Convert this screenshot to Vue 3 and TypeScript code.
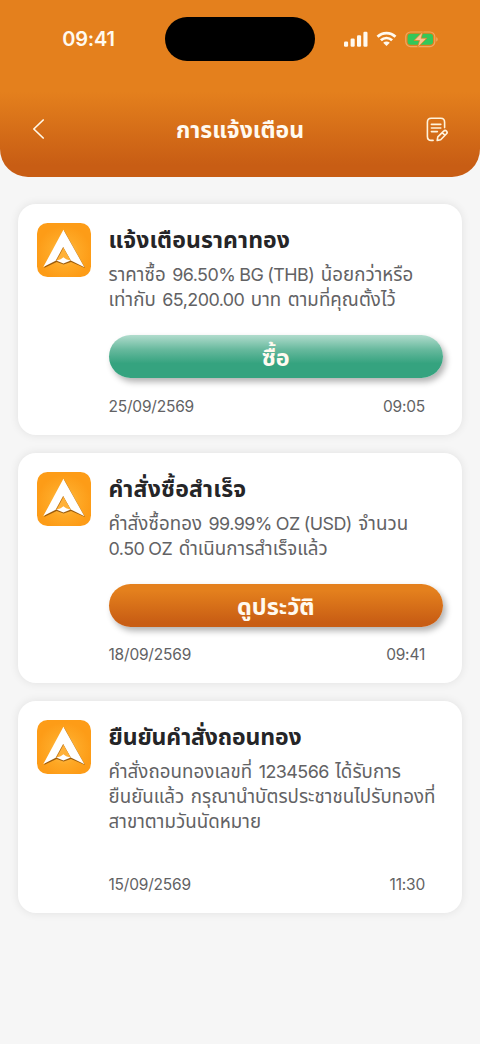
<script setup lang="ts">
interface Notice {
  id: string
  title: string
  lines: string[]
  action?: { label: string; tone: 'buy' | 'history' }
  date: string
  time: string
}

const notices: Notice[] = [
  {
    id: 'price',
    title: 'แจ้งเตือนราคาทอง',
    lines: ['ราคาซื้อ 96.50% BG (THB) น้อยกว่าหรือ', 'เท่ากับ 65,200.00 บาท ตามที่คุณตั้งไว้'],
    action: { label: 'ซื้อ', tone: 'buy' },
    date: '25/09/2569',
    time: '09:05',
  },
  {
    id: 'order',
    title: 'คำสั่งซื้อสำเร็จ',
    lines: ['คำสั่งซื้อทอง 99.99% OZ (USD) จำนวน', '0.50 OZ ดำเนินการสำเร็จแล้ว'],
    action: { label: 'ดูประวัติ', tone: 'history' },
    date: '18/09/2569',
    time: '09:41',
  },
  {
    id: 'withdraw',
    title: 'ยืนยันคำสั่งถอนทอง',
    lines: ['คำสั่งถอนทองเลขที่ 1234566 ได้รับการ', 'ยืนยันแล้ว กรุณานำบัตรประชาชนไปรับทองที่', 'สาขาตามวันนัดหมาย'],
    date: '15/09/2569',
    time: '11:30',
  },
]

// Latin runs are set slightly tighter and smaller than the Thai text around them.
const runs = (line: string) =>
  line
    .split(/([0-9A-Z(][0-9A-Z.,%() ]*[0-9A-Z%)])/)
    .filter(Boolean)
    .map((text) => ({ text, latin: /^[0-9A-Z(]/.test(text) }))
</script>

<template>
  <div class="screen">
    <header class="top">
      <div class="status">
        <span class="clock">09:41</span>
        <span class="island"></span>
        <span class="indicators">
          <svg width="25" height="17" viewBox="0 0 25 17" fill="#fffaf0">
            <rect x="0" y="10.5" width="4.1" height="5.3" rx="1.2" />
            <rect x="6.6" y="7.5" width="4.1" height="8.3" rx="1.2" />
            <rect x="13" y="4.3" width="4.1" height="11.5" rx="1.2" />
            <rect x="19.4" y=".8" width="4.1" height="15" rx="1.2" />
          </svg>
          <svg class="wifi" width="21" height="16" viewBox="0 0 21 16">
            <g fill="none" stroke="#fffaf0" stroke-width="2.7">
              <path d="M1.5 5.8C6.6.8 14.4.8 19.5 5.8" />
              <path d="M4.9 9.3c3.2-3.1 8-3.1 11.2 0" />
            </g>
            <path d="M7.2 11.7c1.9-1.7 4.7-1.7 6.6 0l-3.3 3.3z" fill="#fffaf0" />
          </svg>
          <svg class="battery" width="34" height="17" viewBox="0 0 34 17">
            <rect x=".8" y="1" width="29" height="14.6" rx="4.8" fill="none" stroke="#f0a860" stroke-width="1.2" />
            <rect x="2.6" y="2.8" width="25.4" height="11" rx="3.2" fill="#34c759" />
            <path d="M31.2 6.2c2 .7 2 3.6 0 4.3z" fill="#f0a860" />
            <path d="M18 .4 9 9.5h5.5L12.5 16.4 21.8 7.2h-5.6z" fill="#f9c490" stroke="#e4801d" stroke-width=".7" />
          </svg>
        </span>
      </div>
      <nav class="bar">
        <svg class="back" width="14" height="22" viewBox="0 0 14 22" fill="none" stroke="#fff8e8" stroke-width="1.7" stroke-linecap="round" stroke-linejoin="round">
          <path d="M11.2 2 1.8 11l9.4 9" />
        </svg>
        <h1>การแจ้งเตือน</h1>
        <svg width="24" height="26" viewBox="0 0 24 26" fill="none" stroke="#fff3dc" stroke-width="1.6" stroke-linecap="round" stroke-linejoin="round">
          <path d="M18.6 10.6V5.2c0-2.6-1.2-3.9-3.8-3.9H5.2c-2.6 0-3.8 1.3-3.8 3.9v14.3c0 2.6 1.2 3.9 3.8 3.9h1.9" />
          <path d="M5.4 7.4h9.4M5.4 11h9.4M5.4 14.6h6" />
          <path d="m11.8 19.8 5.9-5.7a1.8 1.8 0 0 1 2.8 2.7l-5.8 5.9-3.5.8zM16.2 15.6l2.8 2.7" />
        </svg>
      </nav>
    </header>

    <main class="list">
      <article v-for="n in notices" :key="n.id" class="card">
        <svg class="logo" width="54" height="54" viewBox="0 0 54 54">
          <defs>
            <radialGradient :id="`glow-${n.id}`" cx=".5" cy=".55" r=".5">
              <stop offset="0" stop-color="#ffc75c" />
              <stop offset=".55" stop-color="#fea825" />
              <stop offset="1" stop-color="#fd9c17" />
            </radialGradient>
          </defs>
          <rect width="54" height="54" rx="10.5" :fill="`url(#glow-${n.id})`" />
          <path d="M27.2 7.8 7 44.9l12.7-6 6.9 2.6 7.4-2.6L48 45z" fill="#9c5c0c" />
          <path d="M26.4 6.8 6.3 44.1l12.9-6.5 7.2-13.2 7.4 13.2 13.6 6.6z" fill="#fff" />
          <path d="m26.4 24.4-7.2 13.2h14.6z" fill="#ffb139" />
          <path d="M19.2 37.6c2.9-.6 5.1-1.6 7.2-3.4 2.1 1.8 4.4 2.8 7.4 3.4l-7.4 2.8z" fill="#fff" />
          <path d="m26.4 24.2-7.2 13.3" stroke="#b66b0c" stroke-width=".7" />
        </svg>
        <div class="body">
          <h2 :class="n.id">{{ n.title }}</h2>
          <p><span v-for="(l, i) in n.lines" :key="i" class="line"><span v-for="(r, j) in runs(l)" :key="j" :class="{ latin: r.latin }">{{ r.text }}</span></span></p>
          <button v-if="n.action" :class="n.action.tone">{{ n.action.label }}</button>
          <footer><span>{{ n.date }}</span><span>{{ n.time }}</span></footer>
        </div>
      </article>
    </main>
  </div>
</template>

<style>
body { background: #f6f6f6; }
</style>

<style scoped>
* { box-sizing: border-box; }
.screen {
  width: 480px;
  height: 1044px;
  overflow: hidden;
  background: #f6f6f6;
  font-family: Inter, "Noto Sans Thai", "Noto Sans", sans-serif;
}
.top {
  height: 177px;
  border-radius: 0 0 28px 28px;
  background: linear-gradient(#e4801d 0, #e4801d 92px, #c85d14 165px, #c85d14 100%);
  color: #fffaf0;
}
.status {
  height: 78px;
  display: grid;
  grid-template-columns: 165px 150px 165px;
  align-items: center;
}
.clock { padding-left: 12px; text-align: center; font-size: 20px; font-weight: 600; letter-spacing: -.2px; }
.island { height: 44px; border-radius: 22px; background: #000; }
.indicators { display: flex; align-items: center; padding-left: 29px; }
.wifi { margin-left: 7px; }
.battery { margin-left: 8px; }
.bar { height: 103px; display: grid; grid-template-columns: 24px 1fr 24px; align-items: center; padding: 0 30px 0 31px; }
.back { margin: 0 0 2px 1px; }
h1 { margin: 0; padding-top: 3px; text-align: center; font-size: 23px; font-weight: 700; text-indent: -1px; }
.list { padding: 27px 18px 0; display: flex; flex-direction: column; gap: 18px; }
.card {
  height: 230.5px;
  display: flex;
  gap: 17.5px;
  padding: 19px;
  border-radius: 18px;
  background: #fff;
  box-shadow: 0 0 10px rgba(0, 0, 0, .09);
}
.card:last-child { height: 212px; }
.logo { flex: none; }
.body { flex: 1; min-width: 0; display: flex; flex-direction: column; }
h2 { margin: 0; height: 39px; line-height: 35px; font-size: 23px; font-weight: 700; color: #252527; white-space: nowrap; }
h2.price { letter-spacing: .1px; }
h2.order { letter-spacing: .25px; }
h2.withdraw { letter-spacing: -.12px; }
p { margin: 0; color: #626264; font-size: 18.7px; letter-spacing: .06px; word-spacing: 1.2px; }
.line { display: block; width: max-content; height: 25px; line-height: 25px; white-space: pre; }
.latin { font-size: 17.9px; letter-spacing: -.55px; word-spacing: -.4px; }
button {
  height: 43px;
  margin: 23px 0 0;
  padding: 2px 0 0;
  border: 0;
  border-radius: 22px;
  color: #fffaf0;
  font: inherit;
  font-size: 23.4px;
  font-weight: 700;
  line-height: 41px;
  box-shadow: 3px 4px 6px rgba(0, 0, 0, .3);
}
.buy { background: linear-gradient(#b1dccd 0, #65b89c 35%, #35a37f 66%, #35a37f); }
.history { background: linear-gradient(#e4801d 15%, #c85d14 90%); }
footer { margin: auto 0 -1px; display: flex; justify-content: space-between; padding-right: 18px; font-size: 15.5px; letter-spacing: -.2px; line-height: 20px; color: #626264; }
</style>
